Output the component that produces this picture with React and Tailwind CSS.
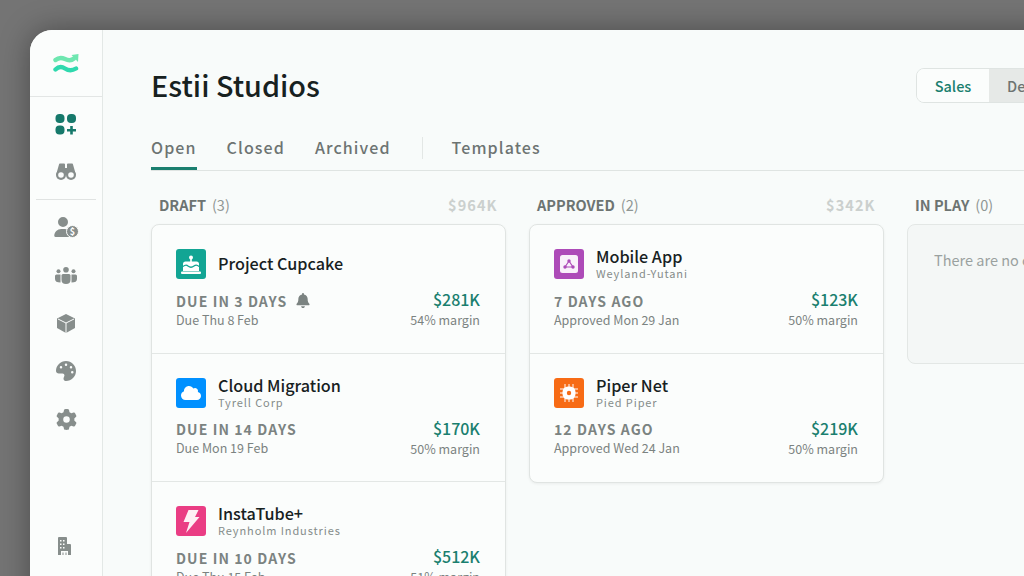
import React from "react";
import { FaBell, FaPalette, FaGear, FaCloud, FaUser } from "react-icons/fa6";

const font = { fontFamily: '"Noto Sans CJK SC", "Noto Sans", sans-serif' };
const G = "#878e8c";
const R = "#fbfdfc";

function Logo() {
  return (
    <svg width="26" height="20" viewBox="0 0 26 20" fill="none">
      <path d="M2.5 6C6 3 9 3.5 12 5C15 6.5 18 7 21 4.5" stroke="#6ee7b0" strokeWidth="4.4" strokeLinecap="round" />
      <path d="M18.5 1L25.5 0L25 8Z" fill="#6ee7b0" />
      <path d="M2.5 15.5C6 12 9 12.5 12 14.5C15 16.5 19 17 23 14.5" stroke="#2fd9ae" strokeWidth="4.4" strokeLinecap="round" />
    </svg>
  );
}

function Dash() {
  return (
    <svg width="22" height="21" viewBox="0 0 22 21" fill="#16796b">
      <rect x="0.5" y="0" width="9" height="9" rx="4" />
      <rect x="12" y="0" width="9" height="9" rx="4" />
      <rect x="0.5" y="11.5" width="9" height="9" rx="4" />
      <path d="M15.2 12h2.6v3h3.2v2.6h-3.2v3h-2.6v-3H12V15h3.2z" />
    </svg>
  );
}

function Binoculars() {
  return (
    <svg width="20" height="17" viewBox="0 0 20 17" fill={G}>
      <path d="M3 1.5Q3 .5 4 .5H8Q9 .5 9 1.5V5H11V1.5Q11 .5 12 .5H16Q17 .5 17 1.5L20 12H0Z" />
      <circle cx="5" cy="12" r="5" />
      <circle cx="15" cy="12" r="5" />
      <circle cx="5" cy="12" r="2.8" fill={R} />
      <circle cx="15" cy="12" r="2.8" fill={R} />
    </svg>
  );
}

function UserDollar() {
  return (
    <span className="relative block h-[20px] w-[24px]">
      <FaUser className="absolute left-0 top-0 h-[20px] w-[18px] text-[#878e8c]" />
      <span className="absolute bottom-[-1px] right-[-1px] flex h-[13px] w-[13px] items-center justify-center rounded-full border border-[#fbfdfc] bg-[#878e8c] text-[9px] font-bold leading-none text-white">$</span>
    </span>
  );
}

function Group() {
  return (
    <svg width="22" height="17" viewBox="0 0 22 17" fill={G}>
      <circle cx="11" cy="2.8" r="2.8" />
      <circle cx="3.5" cy="4.2" r="2" />
      <circle cx="18.5" cy="4.2" r="2" />
      <path d="M6.5 8.5Q6.5 7 8 7H14Q15.5 7 15.5 8.5V13Q15.5 17 11 17Q6.5 17 6.5 13Z" />
      <path d="M0 9Q0 7.5 1.5 7.5H5.5V15.5Q0 15.5 0 12Z" />
      <path d="M22 9Q22 7.5 20.5 7.5H16.5V15.5Q22 15.5 22 12Z" />
    </svg>
  );
}

function Cube() {
  return (
    <svg width="18" height="19" viewBox="0 0 18 19">
      <path d="M9 0L18 4.5V14L9 19L0 14V4.5Z" fill={G} />
      <path d="M1 5L9 9L17 5M9 9V19" stroke={R} strokeWidth="1" fill="none" />
    </svg>
  );
}

function Building() {
  return (
    <svg width="13" height="18" viewBox="0 0 13 18">
      <path d="M1 0H8Q9 0 9 1V7H12Q13 7 13 8V18H0V1Q0 0 1 0Z" fill={G} />
      <path d="M2 3h1.5v1.5H2zM5 3h1.5v1.5H5zM2 6.5h1.5V8H2zM5 6.5h1.5V8H5zM2 10h1.5v1.5H2zM5 10h1.5v1.5H5z" fill={R} />
      <path d="M3 14h7v4H8.5v-2.5h-1V18h-2v-2.5h-1V18H3z" fill={R} />
    </svg>
  );
}

function Nodes() {
  return (
    <svg width="18" height="18" viewBox="0 0 18 18">
      <rect width="18" height="18" rx="2.5" fill="#fff" fillOpacity="0.92" />
      <path d="M9 6L5 12M9 6L13 12M5 12H13" stroke="#ad4bb8" strokeWidth="1.2" fill="none" />
      <circle cx="9" cy="6" r="1.7" fill="#ad4bb8" />
      <circle cx="5" cy="12" r="1.7" fill="#ad4bb8" />
      <circle cx="13" cy="12" r="1.7" fill="#ad4bb8" />
    </svg>
  );
}

function Cake() {
  return (
    <svg width="20" height="19" viewBox="0 0 20 19" fill="#fff">
      <circle cx="10" cy="2.5" r="2" />
      <rect x="9.2" y="3" width="1.6" height="4" />
      <path d="M2 9Q2 6.5 4.5 6.5H15.5Q18 6.5 18 9V16H2Z" />
      <path d="M2 11.5Q5 9 7 11Q10 13.5 13 11Q15.5 9 18 11.5" stroke="#12a594" strokeWidth="1.3" fill="none" />
      <rect x="0" y="16.5" width="20" height="2.5" rx="1" />
    </svg>
  );
}

function Bolt() {
  return (
    <svg width="17" height="23" viewBox="0 0 17 23" fill="#fff" fillOpacity="0.92">
      <path d="M5.5 0H15.5L12 7H16.5L3 23L6.5 12H0.5Z" />
    </svg>
  );
}

function Chip() {
  return (
    <svg width="20" height="20" viewBox="0 0 20 20">
      <path d="M6 1v18M10 1v18M14 1v18M1 6h18M1 10h18M1 14h18" stroke="#fff" strokeWidth="1" />
      <rect x="3.5" y="3.5" width="13" height="13" rx="5.5" fill="#fff" />
      <circle cx="10" cy="10" r="2.2" fill="#f76b15" />
    </svg>
  );
}

function Rail() {
  const item = "flex h-[48px] items-center justify-center";
  return (
    <aside className="flex w-[73px] shrink-0 flex-col border-r border-[#e3e8e6] bg-[#fbfdfc]">
      <div className="flex h-[67px] shrink-0 items-center justify-center border-b border-[#e3e6e5] pt-[2px]">
        <Logo />
      </div>
      <div className="flex h-[102px] shrink-0 flex-col pt-[3px]">
        <div className={item}><Dash /></div>
        <div className={`${item} -mt-px`}><Binoculars /></div>
      </div>
      <div className="mx-[6px] border-t border-[#e0e3e2]" />
      <div className="flex flex-col pt-[3px]">
        <div className={item}><UserDollar /></div>
        <div className={item}><Group /></div>
        <div className={item}><Cube /></div>
        <div className={item}><FaPalette className="h-[20px] w-[20px] -scale-x-100 text-[#878e8c]" /></div>
        <div className={item}><FaGear className="h-[21px] w-[21px] text-[#878e8c]" /></div>
      </div>
      <div className="mt-[94px] flex justify-center pr-[3px]">
        <Building />
      </div>
    </aside>
  );
}

function Tabs() {
  const tab = "flex h-[40px] items-start pt-[6px] text-[16px] leading-[22px] font-medium tracking-[1.1px] text-[#6d7472]";
  return (
    <div className="flex border-b border-[#dfe4e2]">
      <div className={`${tab} -mb-px border-b-[3px] border-[#1a7f6f] text-[#1a7f6f]`}>Open</div>
      <div className={`${tab} ml-[30px]`}>Closed</div>
      <div className={`${tab} ml-[30px]`}>Archived</div>
      <div className="ml-[31px] mt-[7px] h-[22px] border-l border-[#e3e7e5]" />
      <div className={`${tab} ml-[29px]`}>Templates</div>
    </div>
  );
}

function Deal({ icon, bg, name, sub, status, bell, date, value, margin, last }) {
  return (
    <div className={`h-[128.5px] pl-[24px] pr-[24.5px] pt-[24px] ${last ? "" : "border-b border-[#e3e7e5]"}`}>
      <div className="flex h-[30px] items-center gap-[12px]">
        <div className={`flex h-[30px] w-[30px] shrink-0 items-center justify-center rounded-[3px] ${bg}`}>{icon}</div>
        <div className={`flex flex-col ${sub ? "" : "pb-[2px]"}`}>
          <div className="text-[16.2px] leading-[14px] font-medium text-[#17211f]">{name}</div>
          {sub && <div className="mt-[4px] text-[11px] leading-[12px] tracking-[0.9px] text-[#858c8a]">{sub}</div>}
        </div>
      </div>
      <div className="mt-[13px] flex justify-between">
        <div className="-mt-[0.5px]">
          <div className="flex h-[18px] items-center gap-[9px] text-[14px] leading-[18px] font-bold tracking-[1.1px] text-[#7b8381]">
            {status}
            {bell && <FaBell className="h-[15px] w-[14px] text-[#7b8381]" />}
          </div>
          <div className="mt-[1px] text-[12.5px] leading-[18px] text-[#7b8381]">{date}</div>
        </div>
        <div className="-mt-[2px] flex flex-col items-end">
          <div className="text-[16px] leading-[18px] font-medium text-[#1a7f6f]">{value}</div>
          <div className="mt-[3px] text-[12.5px] leading-[18px] text-[#7b8381]">{margin}</div>
        </div>
      </div>
    </div>
  );
}

function Header({ name, count, total }) {
  return (
    <div className="flex h-[30px] items-center justify-between px-[8px] pb-[8px]">
      <div className="flex items-center gap-[6px] text-[14.5px] leading-[20px]">
        <span className="font-bold text-[#6d7472]">{name}</span>
        <span className="text-[#8f9694]">{count}</span>
      </div>
      <div className="text-[14.5px] leading-[20px] font-bold tracking-[1.05px] text-[#cbd0ce]">{total}</div>
    </div>
  );
}

export default function App() {
  return (
    <div style={font} className="h-[576px] w-[1024px] overflow-hidden bg-[#747474] pl-[30px] pt-[30px]">
      <div className="flex h-[600px] w-[1100px] overflow-hidden rounded-tl-[22px] bg-[#f8fbfa] shadow-[0_0_30px_rgba(0,0,0,0.35)]">
        <Rail />
        <main className="min-w-0 flex-1 pl-[48px] pt-[38px]">
          <div className="flex h-[35px] items-center">
            <h1 className="-mt-[2px] w-[765px] shrink-0 text-[28.8px] leading-[38px] font-medium text-[#17211f]">Estii Studios</h1>
            <div className="flex h-[35px] w-[208px] shrink-0 overflow-hidden rounded-[8px] border border-[#dfe4e2] text-[14.5px] font-medium">
              <div className="flex w-[72px] items-center justify-center bg-[#fbfdfc] text-[#1a7f6f]">Sales</div>
              <div className="flex flex-1 items-center bg-[#e6e9e7] pl-[18px] text-[#6d7472]">Delivery</div>
            </div>
          </div>
          <div className="mt-[27px]"><Tabs /></div>
          <div className="mt-[23px] flex gap-[23.5px]">
            <section className="w-[354.5px] shrink-0">
              <Header name="DRAFT" count="(3)" total="$964K" />
              <div className="rounded-[8px] border border-[#e0e4e2] bg-[#fbfdfc] shadow-[0_1px_3px_rgba(0,0,0,0.06)]">
                <Deal bg="bg-[#12a594]" icon={<Cake />} name="Project Cupcake" status="DUE IN 3 DAYS" bell date="Due Thu 8 Feb" value="$281K" margin="54% margin" />
                <Deal bg="bg-[#0090ff]" icon={<FaCloud className="h-[16px] w-[20px] text-white" />} name="Cloud Migration" sub="Tyrell Corp" status="DUE IN 14 DAYS" date="Due Mon 19 Feb" value="$170K" margin="50% margin" />
                <Deal bg="bg-[#ea3d84]" icon={<Bolt />} name="InstaTube+" sub="Reynholm Industries" status="DUE IN 10 DAYS" date="Due Thu 15 Feb" value="$512K" margin="51% margin" last />
              </div>
            </section>
            <section className="w-[354.5px] shrink-0">
              <Header name="APPROVED" count="(2)" total="$342K" />
              <div className="rounded-[8px] border border-[#e0e4e2] bg-[#fbfdfc] shadow-[0_1px_3px_rgba(0,0,0,0.06)]">
                <Deal bg="bg-[#ad4bb8]" icon={<Nodes />} name="Mobile App" sub="Weyland-Yutani" status="7 DAYS AGO" date="Approved Mon 29 Jan" value="$123K" margin="50% margin" />
                <Deal bg="bg-[#f76b15]" icon={<Chip />} name="Piper Net" sub="Pied Piper" status="12 DAYS AGO" date="Approved Wed 24 Jan" value="$219K" margin="50% margin" last />
              </div>
            </section>
            <section className="w-[354.5px] shrink-0">
              <Header name="IN PLAY" count="(0)" total="$0" />
              <div className="h-[140px] rounded-[8px] border border-[#e3e7e5] bg-[#f4f7f6] px-[26px] pt-[25px] text-[14.5px] leading-[20px] whitespace-nowrap text-[#9aa19f]">There are no current deals</div>
            </section>
          </div>
        </main>
      </div>
    </div>
  );
}
